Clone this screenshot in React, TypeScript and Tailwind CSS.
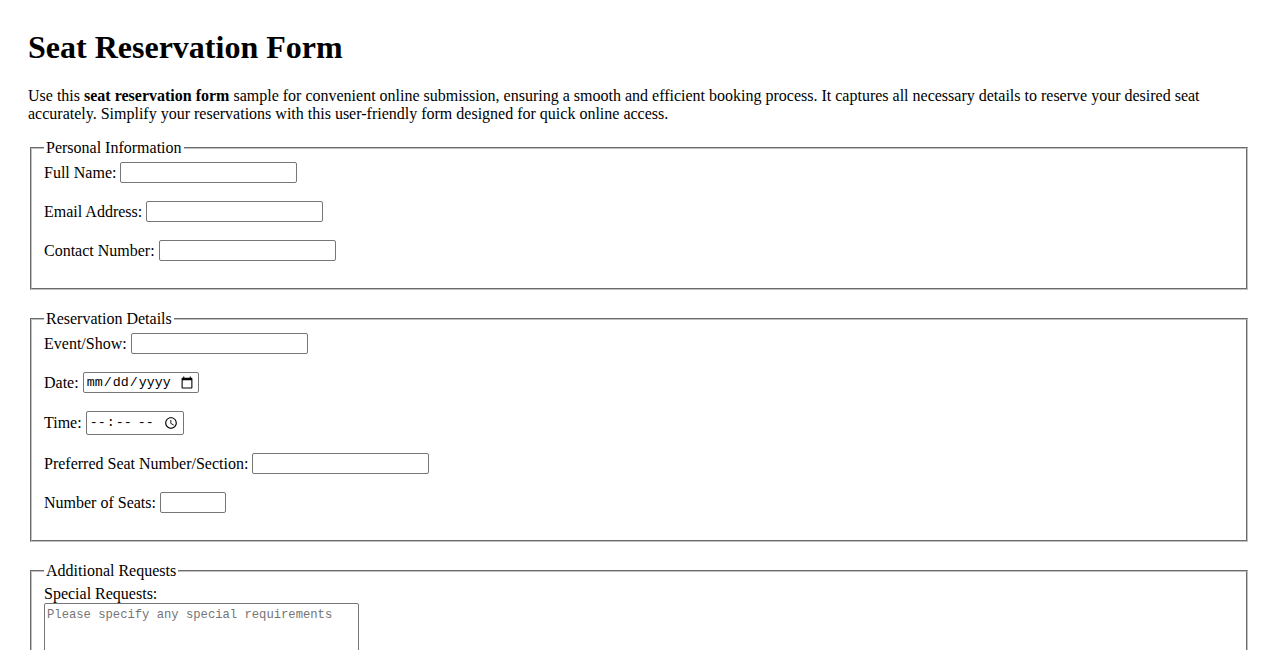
import React from 'react';

const field =
  "h-[21px] w-[177px] rounded-[2px] border border-[#767676] bg-white px-[2px] text-[13.33px] font-['Liberation_Sans',Arial,sans-serif] text-black outline-none";

const mono = "font-['Liberation_Mono','DejaVu_Sans_Mono',monospace]";

function Row({ label, children }: { label: string; children: React.ReactNode }) {
  return (
    <div className="flex items-center">
      <label className="mr-[4px] whitespace-nowrap">{label}</label>
      {children}
    </div>
  );
}

function Group({ title, children }: { title: string; children: React.ReactNode }) {
  return (
    <fieldset className="mx-[2px] border-2 border-[#c0c0c0] [border-style:groove] px-[12px] pt-[5px] pb-[27px]">
      <legend className="px-[2px]">{title}</legend>
      <div className="flex flex-col gap-[18px]">{children}</div>
    </fieldset>
  );
}

export default function App() {
  return (
    <div className="min-h-screen bg-white px-[28px] pt-[29px] font-['Liberation_Serif','Times_New_Roman',serif] text-[16px] leading-[normal] text-black">
      <h1 className="text-[32px] font-bold leading-[normal]">Seat Reservation Form</h1>

      <p className="mt-[21px] mb-[16px]">
        Use this <strong>seat reservation form</strong> sample for convenient online submission, ensuring a
        smooth and efficient booking process. It captures all necessary details to reserve your desired seat
        accurately. Simplify your reservations with this user-friendly form designed for quick online access.
      </p>

      <form className="flex flex-col gap-[20px]">
        <Group title="Personal Information">
          <Row label="Full Name:">
            <input type="text" className={field} />
          </Row>
          <Row label="Email Address:">
            <input type="email" className={field} />
          </Row>
          <Row label="Contact Number:">
            <input type="tel" className={field} />
          </Row>
        </Group>

        <Group title="Reservation Details">
          <Row label="Event/Show:">
            <input type="text" className={field} />
          </Row>
          <Row label="Date:">
            <input
              type="date"
              className={`h-[21px] w-[116px] rounded-[2px] border border-[#767676] bg-white px-[2px] text-[13.33px] ${mono} text-black outline-none`}
            />
          </Row>
          <Row label="Time:">
            <input
              type="time"
              className={`h-[24px] w-[98px] rounded-[2px] border border-[#767676] bg-white px-[2px] text-[13.33px] ${mono} text-black outline-none`}
            />
          </Row>
          <Row label="Preferred Seat Number/Section:">
            <input type="text" className={field} />
          </Row>
          <Row label="Number of Seats:">
            <input
              type="number"
              className="h-[21px] w-[66px] rounded-[2px] border border-[#767676] bg-white px-[2px] text-[13.33px] text-black outline-none"
            />
          </Row>
        </Group>

        <fieldset className="mx-[2px] border-2 border-[#c0c0c0] [border-style:groove] px-[12px] pt-[5px] pb-[27px]">
          <legend className="px-[2px]">Additional Requests</legend>
          <label className="block">Special Requests:</label>
          <textarea
            rows={4}
            placeholder="Please specify any special requirements"
            className={`block h-[72px] w-[315px] resize rounded-[2px] border border-[#767676] bg-white px-[2px] pt-[4px] pb-[2px] text-[12.2px] ${mono} text-black outline-none placeholder:text-[#757575]`}
          />
        </fieldset>
      </form>
    </div>
  );
}
